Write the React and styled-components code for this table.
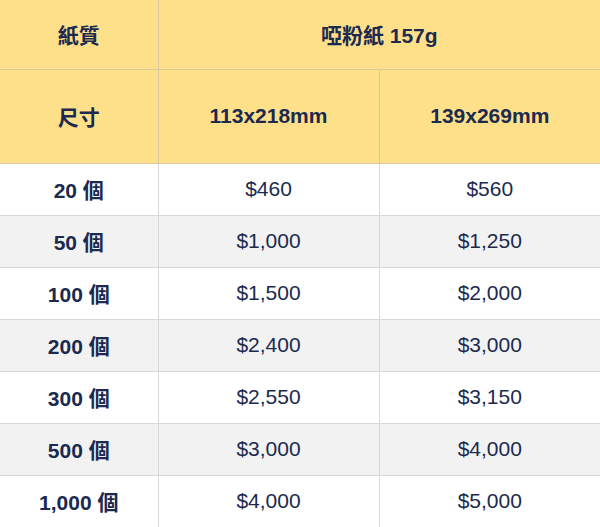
import styled, { createGlobalStyle } from "styled-components";

const GlobalStyle = createGlobalStyle`
  body {
    margin: 0;
    background: #ffffff;
    font-family: "Liberation Sans", Arial, "Noto Sans CJK TC", sans-serif;
  }
`;

const rows = [
  ["20 個", "$460", "$560"],
  ["50 個", "$1,000", "$1,250"],
  ["100 個", "$1,500", "$2,000"],
  ["200 個", "$2,400", "$3,000"],
  ["300 個", "$2,550", "$3,150"],
  ["500 個", "$3,000", "$4,000"],
  ["1,000 個", "$4,000", "$5,000"],
];

function App() {
  return (
    <>
      <GlobalStyle />
      <Wrapper>
        <Table>
          <colgroup>
            <col style={{ width: 158 }} />
            <col style={{ width: 221 }} />
            <col style={{ width: 221 }} />
          </colgroup>
          <thead>
            <HeadRow height={69}>
              <HeadCell>紙質</HeadCell>
              <HeadCell colSpan={2}>啞粉紙 157g</HeadCell>
            </HeadRow>
            <HeadRow height={94}>
              <HeadCell>尺寸</HeadCell>
              <HeadCell>113x218mm</HeadCell>
              <HeadCell>139x269mm</HeadCell>
            </HeadRow>
          </thead>
          <tbody>
            {rows.map((r, i) => (
              <Row key={r[0]} $striped={i % 2 === 1}>
                <QtyCell>{r[0]}</QtyCell>
                <Cell>{r[1]}</Cell>
                <Cell>{r[2]}</Cell>
              </Row>
            ))}
          </tbody>
        </Table>
      </Wrapper>
    </>
  );
}

export default App;

const Wrapper = styled.div`
  width: 600px;
  height: 527px;
  overflow: hidden;
`;

const Table = styled.table`
  width: 600px;
  border-collapse: collapse;
  table-layout: fixed;
  color: #1b2a4e;
  font-size: 21px;
`;

const HeadRow = styled.tr`
  height: ${(p) => p.height}px;
  background-color: #fee08b;
`;

const HeadCell = styled.th`
  border: 1px solid #d8cc9c;
  border-top: none;
  font-weight: 700;
  text-align: center;
  vertical-align: middle;
  padding: 0;
  &:first-child {
    border-left: none;
  }
  &:last-child {
    border-right: none;
  }
`;

const Row = styled.tr`
  height: 52px;
  background-color: ${(p) => (p.$striped ? "#f2f2f2" : "#ffffff")};
`;

const Cell = styled.td`
  border: 1px solid #d8d8d8;
  text-align: center;
  vertical-align: middle;
  padding: 0;
  font-weight: 400;
  &:last-child {
    border-right: none;
  }
`;

const QtyCell = styled(Cell)`
  font-weight: 700;
  border-left: none;
`;
